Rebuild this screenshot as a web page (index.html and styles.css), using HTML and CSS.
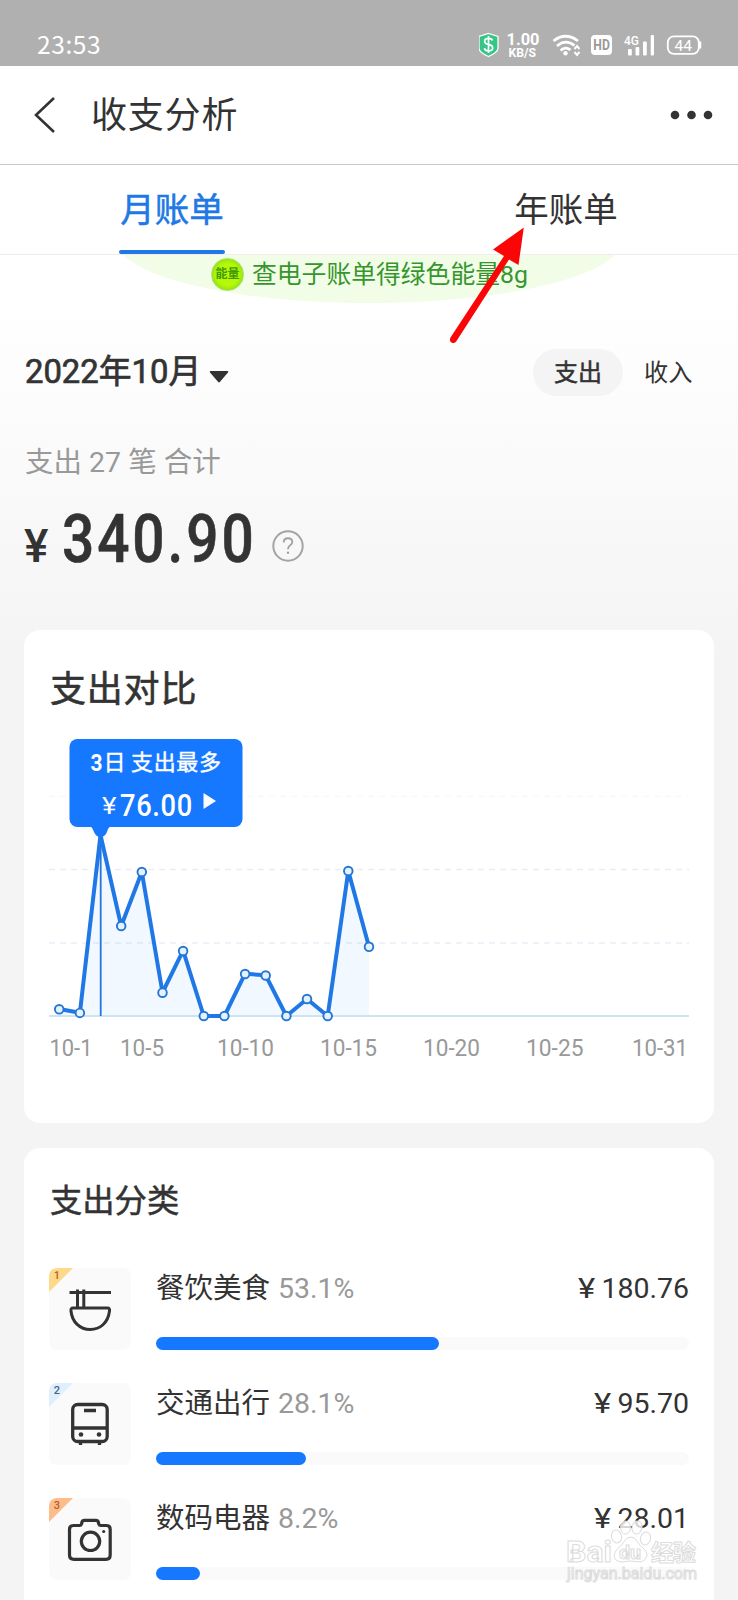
FILE: index.html
```html
<!DOCTYPE html>
<html lang="zh-CN">
<head>
<meta charset="utf-8">
<title>收支分析</title>
<link rel="stylesheet" href="styles.css">
</head>
<body>
<div class="app">
  <header class="status">
    <span class="clock">23:53</span>
    <svg class="status-icons" width="230" height="32" viewBox="0 0 230 32">
      <path d="M9.500 2.500L19 5.500V17.500Q18.500 21.500 9.500 25.500Q.5 21.500 0 17.500V5.500Z" fill="#35c587" stroke="#fff" stroke-width="1.300"/>
      <path d="M13.500 9.500Q12.800 7.300 9.500 7.300Q5.700 7.300 5.700 10.200Q5.700 12.800 9.500 13.400Q13.600 14.200 13.600 17Q13.600 19.900 9.500 19.900Q6 19.900 5.400 17.300M9.500 5V22" fill="none" stroke="#fff" stroke-width="1.700"/>
      <text x="27.500" y="14.300" class="st-b" font-size="16.500" textLength="33" lengthAdjust="spacingAndGlyphs">1.00</text>
      <text x="29.500" y="26.200" class="st-b" font-size="13" textLength="27.500" lengthAdjust="spacingAndGlyphs">KB/S</text>
      <g fill="none" stroke="#fff" stroke-width="2.700">
        <path d="M74.500 10Q86.500 .5 99 10"/>
        <path d="M78 15Q86.500 7.500 95.500 14.500"/>
        <path d="M81.500 19.500Q86.500 15 91.500 19"/>
      </g>
      <circle cx="86.500" cy="22.300" r="2.200" fill="#fff"/>
      <path d="M95.500 18L98 15L100.500 18M95.500 21L98 24L100.500 21" fill="none" stroke="#fff" stroke-width="2"/>
      <rect x="112" y="4" width="21" height="20" rx="4" fill="#fff"/>
      <text x="114.300" y="19.300" font-size="15" class="st-hd" textLength="16.500" lengthAdjust="spacingAndGlyphs">HD</text>
      <text x="145" y="14" font-size="13.500" class="st-m" textLength="15" lengthAdjust="spacingAndGlyphs">4G</text>
      <g fill="#fff">
        <rect x="149" y="18" width="3.800" height="6.500" rx="1"/>
        <rect x="156.500" y="16" width="3.800" height="8.500" rx="1"/>
        <rect x="164" y="10.500" width="3.800" height="14" rx="1"/>
        <rect x="171.700" y="4" width="3.300" height="20.500" rx="1"/>
      </g>
      <rect x="188.800" y="5.300" width="31" height="17.500" rx="6" fill="none" stroke="#fff" stroke-width="1.800"/>
      <path d="M221 10.500V17.500" stroke="#fff" stroke-width="2.500"/>
      <text x="195.500" y="19.500" font-size="15.500" class="st-r" textLength="17.500" lengthAdjust="spacingAndGlyphs">44</text>
    </svg>
  </header>

  <nav class="titlebar">
    <svg class="back" width="24" height="38" viewBox="0 0 24 38"><path d="M21 2L3 19L21 36" fill="none" stroke="#333" stroke-width="2.600"/></svg>
    <h1 class="page-title">收支分析</h1>
    <svg class="more" width="44" height="10" viewBox="0 0 44 10"><g fill="#333"><circle cx="5" cy="5" r="4.300"/><circle cx="21.500" cy="5" r="4.300"/><circle cx="38" cy="5" r="4.300"/></g></svg>
  </nav>

  <div class="tabs">
    <div class="tab tab-on"><span>月账单</span></div>
    <div class="tab"><span>年账单</span></div>
  </div>

  <div class="banner">
    <div class="banner-bg"></div>
    <span class="badge">能量</span>
    <span class="banner-text">查电子账单得绿色能量8g</span>
  </div>

  <section class="summary">
    <div class="month-row">
      <span class="month">2022年10月</span>
      <svg class="caret" width="20" height="12" viewBox="0 0 20 12"><path d="M1.500 0H18.500Q20 0 19 1.500L11 10.800Q10 12 9 10.800L1 1.500Q0 0 1.500 0Z" fill="#333"/></svg>
      <span class="pill">支出</span>
      <span class="income">收入</span>
    </div>
    <p class="count">支出 27 笔 合计</p>
    <div class="total">
      <span class="yen">¥</span><span class="total-num">340.90</span>
      <svg class="help" width="32" height="32" viewBox="0 0 32 32"><circle cx="16" cy="16" r="14.700" fill="none" stroke="#a3a3a3" stroke-width="2"/><path d="M11.700 12.500Q11.700 8.200 16 8.200Q20.300 8.200 20.300 12Q20.300 14 18.200 15.300Q16 16.600 16 19.300" fill="none" stroke="#a3a3a3" stroke-width="1.900"/><circle cx="16" cy="22.800" r="1.200" fill="#a3a3a3"/></svg>
    </div>
  </section>

  <section class="card compare">
    <h2 class="compare-title">支出对比</h2>
    <svg class="chart" width="690" height="350" viewBox="24 730 690 350">
      <g fill="none" stroke-dasharray="6 5" stroke-width="1.500">
        <path d="M49 796.500H689" stroke="#f8f8f8"/>
        <path d="M49 869.500H689" stroke="#ebeef1"/>
        <path d="M49 943H689" stroke="#e9f0f7"/>
      </g>
      <path d="M59.200 1009L79.900 1012.700L100.500 835L121.200 926L141.800 872L162.500 992.500L183.100 950.700L203.800 1016L224.400 1016L245.100 973.700L265.700 975.300L286.400 1016L307 999L327.700 1016L348.300 871L369 946.700V1016H59.200Z" fill="#1677ff" fill-opacity=".055"/>
      <path d="M49 1016H689" stroke="#cfe4f3" stroke-width="2"/>
      <path d="M100.700 835V1016" stroke="#2276df" stroke-width="1.800"/>
      <path d="M59.200 1009L79.900 1012.700L100.500 835L121.200 926L141.800 872L162.500 992.500L183.100 950.700L203.800 1016L224.400 1016L245.100 973.700L265.700 975.300L286.400 1016L307 999L327.700 1016L348.300 871L369 946.700" fill="none" stroke="#2078e6" stroke-width="4" stroke-linejoin="round"/>
      <g fill="#e3f2ff" stroke="#2676d2" stroke-width="1.900">
        <circle cx="59.200" cy="1009.300" r="4.300"/><circle cx="79.900" cy="1012.900" r="4.300"/><circle cx="121.200" cy="926" r="4.300"/><circle cx="141.800" cy="872" r="4.300"/><circle cx="162.500" cy="992.700" r="4.300"/><circle cx="183.100" cy="951" r="4.300"/><circle cx="203.800" cy="1016" r="4.300"/><circle cx="224.400" cy="1016" r="4.300"/><circle cx="245.100" cy="974" r="4.300"/><circle cx="265.700" cy="975.500" r="4.300"/><circle cx="286.400" cy="1016" r="4.300"/><circle cx="307" cy="999" r="4.300"/><circle cx="327.700" cy="1016" r="4.300"/><circle cx="348.300" cy="871" r="4.300"/><circle cx="369" cy="946.800" r="4.300"/>
      </g>
      <rect x="69.500" y="739" width="173" height="88" rx="8" fill="#1677ff"/>
      <path d="M91 826.500Q93 829 94 832Q96 837 100.500 837Q105 837 107 832Q108 828 110 826.500Z" fill="#1677ff"/>
      <text x="90.500" y="770.500" class="tip-day" textLength="12" lengthAdjust="spacingAndGlyphs">3</text>
      <text x="103.500" y="770" class="tip-cn" textLength="22">日</text>
      <text x="131" y="770" class="tip-cn" textLength="90">支出最多</text>
      <text x="102" y="813.500" class="tip-yen" textLength="14.500" lengthAdjust="spacingAndGlyphs">¥</text>
      <text x="120" y="815.800" class="tip-num" textLength="82" lengthAdjust="spacing" transform="translate(120 0) scale(.88 1) translate(-120 0)">76.00</text>
      <path d="M203.500 793L216 801L203.500 809Z" fill="#fff"/>
      <g class="axis">
        <text x="49.500" y="1056" textLength="43" lengthAdjust="spacingAndGlyphs">10-1</text>
        <text x="120" y="1056" textLength="44" lengthAdjust="spacingAndGlyphs">10-5</text>
        <text x="217" y="1056" textLength="57" lengthAdjust="spacingAndGlyphs">10-10</text>
        <text x="320" y="1056" textLength="57" lengthAdjust="spacingAndGlyphs">10-15</text>
        <text x="423" y="1056" textLength="57" lengthAdjust="spacingAndGlyphs">10-20</text>
        <text x="526" y="1056" textLength="57.500" lengthAdjust="spacingAndGlyphs">10-25</text>
        <text x="632" y="1056" textLength="56" lengthAdjust="spacingAndGlyphs">10-31</text>
      </g>
    </svg>
  </section>

  <section class="card classes">
    <h2 class="classes-title">支出分类</h2>
    <ul class="list">
      <li class="item">
        <div class="icon">
          <svg width="82" height="82" viewBox="0 0 82 82">
            <path d="M0 24V7Q0 0 7 0H24Z" fill="#ffd98a"/><text x="4.800" y="11" class="rank rank-1">1</text>
            <g fill="none" stroke="#333" stroke-width="3"><path d="M20.500 24.500H62M28.500 21.500V39M34.800 21.500V39"/><path d="M24 40H58.500Q61 40 60.500 43C59 55 51 61.500 41.200 61.500C31 61.500 23 54 22 43Q21.500 40 24 40Z" stroke-linejoin="round"/></g>
          </svg>
        </div>
        <div class="detail">
          <div class="line"><span class="name">餐饮美食</span><span class="pct">53.1%</span><span class="money"><i class="cny">¥</i>180.76</span></div>
          <div class="bar"><div class="fill" style="width:53.1%"></div></div>
        </div>
      </li>
      <li class="item">
        <div class="icon">
          <svg width="82" height="82" viewBox="0 0 82 82">
            <path d="M0 24V7Q0 0 7 0H24Z" fill="#dff0fc"/><text x="4.800" y="11" class="rank rank-2">2</text>
            <g fill="none" stroke="#333" stroke-width="3.300"><rect x="23.700" y="21.500" width="34.500" height="37" rx="5"/><path d="M23.500 45H58M35 27.500H47M31.500 58V62M50.500 58V62"/></g><g fill="#333"><circle cx="32" cy="51.500" r="2.300"/><circle cx="50" cy="51.500" r="2.300"/></g>
          </svg>
        </div>
        <div class="detail">
          <div class="line"><span class="name">交通出行</span><span class="pct">28.1%</span><span class="money"><i class="cny">¥</i>95.70</span></div>
          <div class="bar"><div class="fill" style="width:28.1%"></div></div>
        </div>
      </li>
      <li class="item">
        <div class="icon">
          <svg width="82" height="82" viewBox="0 0 82 82">
            <path d="M0 24V7Q0 0 7 0H24Z" fill="#fcbd8b"/><text x="4.800" y="11" class="rank rank-3">3</text>
            <g fill="none" stroke="#333" stroke-width="3.200" stroke-linejoin="round"><path d="M24.500 27.500H30.500Q32 27.500 32.500 26L33 24Q33.500 22.300 35.300 22.300H47Q48.800 22.300 49.300 24L49.800 26Q50.300 27.500 52 27.500H57.500Q61.200 27.500 61.200 31.500V57Q61.200 61.300 57 61.300H25Q20.500 61.300 20.500 57V31.500Q20.500 27.500 24.500 27.500Z"/><circle cx="41.500" cy="43.300" r="9.200"/></g><circle cx="54.700" cy="33.500" r="1.600" fill="#333"/>
          </svg>
        </div>
        <div class="detail">
          <div class="line"><span class="name">数码电器</span><span class="pct">8.2%</span><span class="money"><i class="cny">¥</i>28.01</span></div>
          <div class="bar"><div class="fill" style="width:8.2%"></div></div>
        </div>
      </li>
    </ul>
  </section>

  <svg class="arrow" width="80" height="120" viewBox="450 225 80 120"><path d="M523.800 227.500L518.500 265L509 259.500L456.200 341.500Q454 344 451.500 342.500Q449 341 450.500 337.500L504 256L493 249.500Z" fill="#fb0606"/></svg>

  <svg class="watermark" width="140" height="66" viewBox="562 1520 140 66">
    <g fill="#fff" fill-opacity=".8" stroke="#dcdcdc" stroke-width="1">
      <ellipse cx="616.500" cy="1536.500" rx="5" ry="6.500" transform="rotate(-15 616.500 1536.500)"/>
      <ellipse cx="625.500" cy="1527.500" rx="5" ry="6.500"/>
      <ellipse cx="637" cy="1527.500" rx="5" ry="6.500" transform="rotate(10 637 1527.500)"/>
      <ellipse cx="645.500" cy="1538.500" rx="5" ry="6.500" transform="rotate(15 645.500 1538.500)"/>
      <path d="M631 1537Q635 1537 637.500 1542Q640 1546 644 1549Q649 1554 645.500 1559Q642 1563 635 1561.500Q630 1560.500 626 1561.500Q619 1563 615.500 1559.500Q612 1554 618 1548.500Q622 1545 624.500 1541Q627 1537 631 1537Z"/>
      <text x="566" y="1562" class="wm-b" font-size="30" textLength="46" lengthAdjust="spacingAndGlyphs">Bai</text>
      <text x="619" y="1558.500" class="wm-b" font-size="18" textLength="22" lengthAdjust="spacingAndGlyphs">du</text>
      <text x="651" y="1560.500" class="wm-b" font-size="23" textLength="45">经验</text>
      <text x="567" y="1578.500" class="wm-u" font-size="16" textLength="130" lengthAdjust="spacingAndGlyphs">jingyan.baidu.com</text>
    </g>
  </svg>
</div>
</body>
</html>
```
FILE: styles.css
```css
* { box-sizing: border-box; margin: 0; padding: 0; }
body { font-family: Roboto, "Noto Sans CJK SC", sans-serif; color: #333; background: #f4f4f4; }
svg { display: block; flex: none; }
.app { position: relative; width: 738px; height: 1600px; overflow: hidden; background: linear-gradient(#fff 300px, #f4f4f4 660px); white-space: nowrap; }

.status { height: 66px; background: #b0b0b0; display: flex; justify-content: space-between; padding: 31px 29px 0 37px; }
.clock { font-size: 24.500px; line-height: 26px; letter-spacing: .6px; color: #fff; font-family: "Noto Sans CJK SC", sans-serif; }
.st-b { fill: #fff; font-weight: 700; }
.st-m { fill: #fff; font-weight: 500; }
.st-r { fill: #fff; }
.st-hd { fill: #999; font-weight: 700; }

.titlebar { height: 99px; background: #fff; border-bottom: 1px solid #c8c8c8; display: flex; align-items: center; padding: 0 24px 1px 33px; }
.page-title { margin-left: 34px; padding-top: 3px; font-size: 36px; font-weight: 400; letter-spacing: .8px; line-height: 48px; }
.more { margin-left: auto; }

.tabs { height: 90px; display: flex; justify-content: space-between; background: #fff; border-bottom: 1px solid #ededed; font-size: 34.500px; }
.tab { width: 344px; display: flex; justify-content: center; }
.tab span { position: relative; height: 89px; line-height: 90px; padding: 0 1px; }
.tab-on span { color: #2078e6; -webkit-text-stroke: .5px #2078e6; }
.tab-on span::after { content: ""; position: absolute; left: 0; right: 0; bottom: 0; height: 4px; border-radius: 2px; background: #2078e6; }

.banner { position: relative; height: 49px; overflow: hidden; display: flex; align-items: flex-start; padding-left: 211px; }
.banner-bg { position: absolute; left: 116px; top: -78px; width: 506px; height: 126px; border-radius: 50%; background: #f1fde6; }
.badge { position: relative; margin-top: 3px; width: 33px; height: 33px; border-radius: 50%; background: radial-gradient(#b6f808 50%, #8be410 75%, #d5f67b); border: 1px solid #a9df62; font-size: 12px; font-weight: 700; color: #3f9a05; line-height: 31px; text-align: center; }
.banner-text { position: relative; margin-left: 8px; font-size: 24.800px; line-height: 40px; color: #36962d; }

.summary { height: 326px; padding: 45px 0 0 25px; }
.month-row { display: flex; align-items: center; height: 47px; }
.month { width: 173px; font-size: 32.800px; font-weight: 400; -webkit-text-stroke: .7px #333; line-height: 47px; }
.caret { margin: 8px 0 0 11px; }
.pill { margin-left: 304px; width: 90px; height: 47px; line-height: 48px; border-radius: 24px; background: #f4f4f4; text-align: center; font-size: 24px; -webkit-text-stroke: .5px #333; }
.income { margin-left: 21px; font-size: 24.200px; line-height: 48px; padding-top: 1px; }
.count { margin-top: 46px; font-size: 28.500px; line-height: 42px; color: #999; }
.total { display: flex; align-items: flex-end; margin-top: 22px; height: 74px; font-weight: 500; }
.yen { font-size: 46px; line-height: 54px; width: 37px; padding-bottom: 7px; text-indent: -1px; }
.total-num { width: 190px; font-size: 66px; line-height: 76px; padding-bottom: 2px; letter-spacing: 3.400px; -webkit-text-stroke: .6px #333; transform: scaleX(.86); transform-origin: 0 50%; }
.help { margin: 0 0 18px 20px; }

.card { margin: 0 24px; background: #fff; border-radius: 16px; }
.compare { height: 493px; padding-top: 33px; }
.compare-title { margin-left: 26px; font-size: 36px; line-height: 54px; font-weight: 400; -webkit-text-stroke: .6px #333; letter-spacing: .8px; }
.chart { margin-top: 13px; }
.tip-day { fill: #fff; font-size: 24px; font-weight: 700; }
.tip-cn { fill: #fff; font-size: 22px; stroke: #fff; stroke-width: .4px; }
.tip-yen { fill: #fff; font-size: 24px; }
.tip-num { fill: #fff; font-size: 31px; font-weight: 500; }
.axis { fill: #999; font-size: 23.500px; }

.classes { margin-top: 25px; height: 500px; padding: 29px 25px 0; }
.classes-title { margin-left: 1px; font-size: 32.300px; line-height: 48px; font-weight: 400; -webkit-text-stroke: .5px #333; }
.list { list-style: none; margin-top: 43px; }
.item { display: flex; height: 115px; }
.icon { width: 82px; height: 82px; border-radius: 8px; background: #fafafa; overflow: hidden; flex: none; }
.rank { font-size: 11px; font-weight: 500; }
.rank-1 { fill: #b3661a; }
.rank-2 { fill: #45658a; }
.rank-3 { fill: #b86030; }
.detail { margin-left: 25px; width: 533px; }
.line { display: flex; height: 69px; font-size: 28.500px; line-height: 42px; }
.pct { margin-left: 8px; color: #999; }
.money { margin-left: auto; }
.cny { display: inline-block; font-style: normal; margin-right: 7px; transform: scaleX(1.15); }
.bar { height: 13px; border-radius: 7px; background: #fafafa; }
.fill { height: 13px; border-radius: 7px; background: #1677ff; }

.arrow { position: absolute; left: 450px; top: 225px; }
.watermark { position: absolute; left: 562px; top: 1520px; }
.wm-b { font-weight: 700; }
.wm-u { font-weight: 400; }
```
